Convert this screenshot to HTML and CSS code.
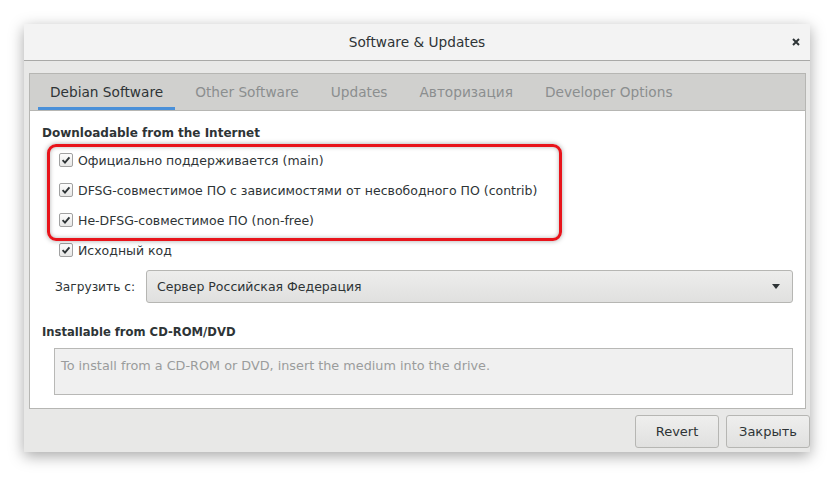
FILE: index.html
```html
<!DOCTYPE html>
<html lang="en">
<head>
  <meta charset="UTF-8" />
  <title>Software &amp; Updates</title>
  <link rel="stylesheet" href="styles.css">
</head>
<body>
  <div class="window">
    <!-- Title bar -->
    <header class="titlebar">
      <span class="title">Software &amp; Updates</span>
      <svg class="close" viewBox="0 0 8 8"><path d="M1 1 L7 7 M7 1 L1 7" /></svg>
    </header>

    <div class="body">
      <div class="notebook">
        <nav class="tabs">
          <span class="tab active">Debian Software</span>
          <span class="tab">Other Software</span>
          <span class="tab">Updates</span>
          <span class="tab">Авторизация</span>
          <span class="tab">Developer Options</span>
        </nav>

        <section class="page">
          <h3>Downloadable from the Internet</h3>

          <div class="checks">
            <label class="check"><span class="box"><svg viewBox="0 0 14 14"><path d="M3 7.2 L5.8 10 L11 4" /></svg></span>Официально поддерживается (main)</label>
            <label class="check"><span class="box"><svg viewBox="0 0 14 14"><path d="M3 7.2 L5.8 10 L11 4" /></svg></span>DFSG-совместимое ПО с зависимостями от несвободного ПО (contrib)</label>
            <label class="check"><span class="box"><svg viewBox="0 0 14 14"><path d="M3 7.2 L5.8 10 L11 4" /></svg></span>Не-DFSG-совместимое ПО (non-free)</label>
            <label class="check"><span class="box"><svg viewBox="0 0 14 14"><path d="M3 7.2 L5.8 10 L11 4" /></svg></span>Исходный код</label>
            <div class="highlight"></div>
          </div>

          <div class="source">
            <span class="source-label">Загрузить с:</span>
            <div class="combo">
              <span>Сервер Российская Федерация</span>
              <svg class="arrow" viewBox="0 0 8 5"><path d="M0 0 H8 L4 5 Z" /></svg>
            </div>
          </div>

          <h3 class="cd-title">Installable from CD-ROM/DVD</h3>
          <div class="cdbox">To install from a CD-ROM or DVD, insert the medium into the drive.</div>
        </section>
      </div>

      <!-- Buttons -->
      <div class="actions">
        <button class="btn">Revert</button>
        <button class="btn">Закрыть</button>
      </div>
    </div>
  </div>
</body>
</html>
```

FILE: styles.css
```css
body {
  margin: 0;
  padding: 24px;
  background: #fff;
  font-family: "DejaVu Sans", sans-serif;
  font-size: 12.5px;
  color: #2e3436;
}

/* Window */
.window {
  width: 786px;
  height: 428px;
  display: flex;
  flex-direction: column;
  background: #e8e8e7;
  box-shadow: 0 4px 14px rgba(0, 0, 0, 0.35);
}
.titlebar {
  height: 36px;
  flex: none;
  display: flex;
  align-items: center;
  justify-content: center;
  position: relative;
  background: #f3f3f3;
  border-bottom: 1px solid #a9a9a7;
}
.title {
  font-size: 13.7px;
  color: #2e3436;
}
.close {
  position: absolute;
  right: 10px;
  top: 14px;
  width: 8px;
  height: 8px;
}
.close path {
  stroke: #2e3436;
  stroke-width: 2;
}

.body {
  flex: 1;
  display: flex;
  flex-direction: column;
  padding: 12px 4px 5px 5px;
}

/* Notebook */
.notebook {
  border: 1px solid #b6b6b3;
  background: #fff;
  height: 334px;
  display: flex;
  flex-direction: column;
}
.tabs {
  height: 36px;
  flex: none;
  display: flex;
  padding-left: 8px;
  background: #d0d0ce;
  border-bottom: 1px solid #b6b6b3;
}
.tab {
  display: flex;
  align-items: center;
  padding: 3px 12px 0 12px;
  margin-right: 8px;
  font-size: 13.7px;
  color: #8b8e8f;
  border-bottom: 3px solid transparent;
}
.tab.active {
  color: #2e3436;
  border-bottom-color: #4a90d9;
}

.page {
  padding: 14px 12px 0 12px;
}
.page h3 {
  margin: 0;
  font-size: 12px;
  font-weight: bold;
  line-height: 16px;
}
.page .cd-title {
  font-size: 11.6px;
  margin-top: 21px;
}

/* Checkboxes */
.checks {
  position: relative;
  padding: 4px 0 0 17px;
}
.check {
  display: flex;
  align-items: center;
  height: 30px;
  gap: 5px;
}
.box {
  width: 12px;
  height: 12px;
  border: 1px solid #a1a1a1;
  border-radius: 2px;
  background: linear-gradient(#fdfdfd, #e6e6e5);
  display: flex;
}
.box svg {
  width: 12px;
  height: 12px;
}
.box path {
  fill: none;
  stroke: #2e3436;
  stroke-width: 2.2;
}
.highlight {
  position: absolute;
  left: 5px;
  top: 3px;
  width: 509px;
  height: 91px;
  border: 3px solid #e8141b;
  border-radius: 9px;
  box-shadow: 0 0 5px rgba(0, 0, 0, 0.35), inset 0 0 4px rgba(0, 0, 0, 0.3);
}

/* Source combo */
.source {
  display: flex;
  align-items: center;
  margin-top: 5px;
  padding-left: 13px;
}
.source-label {
  width: 91px;
  font-size: 12.2px;
}
.combo {
  flex: 1;
  height: 31px;
  display: flex;
  align-items: center;
  justify-content: space-between;
  padding: 0 12px 0 10px;
  border: 1px solid #b6b6b3;
  border-radius: 3px;
  background: linear-gradient(#ededec, #e0e0df);
}
.arrow {
  width: 8px;
  height: 5px;
  fill: #2e3436;
}

.cdbox {
  margin: 8px 0 0 12px;
  height: 47px;
  padding: 9px 6px 0 6px;
  box-sizing: border-box;
  background: #f0f0f0;
  border: 1px solid #b8b8b6;
  color: #9a9c9c;
  font-size: 12.8px;
}

/* Buttons */
.actions {
  display: flex;
  justify-content: flex-end;
  gap: 7px;
  margin-top: 6px;
  margin-right: -4px;
}
.btn {
  width: 84px;
  height: 33px;
  padding: 0;
  font-family: inherit;
  font-size: 13px;
  color: #2e3436;
  border: 1px solid #b6b6b3;
  border-radius: 3px;
  background: linear-gradient(#efefee, #e0e0df);
}
```
